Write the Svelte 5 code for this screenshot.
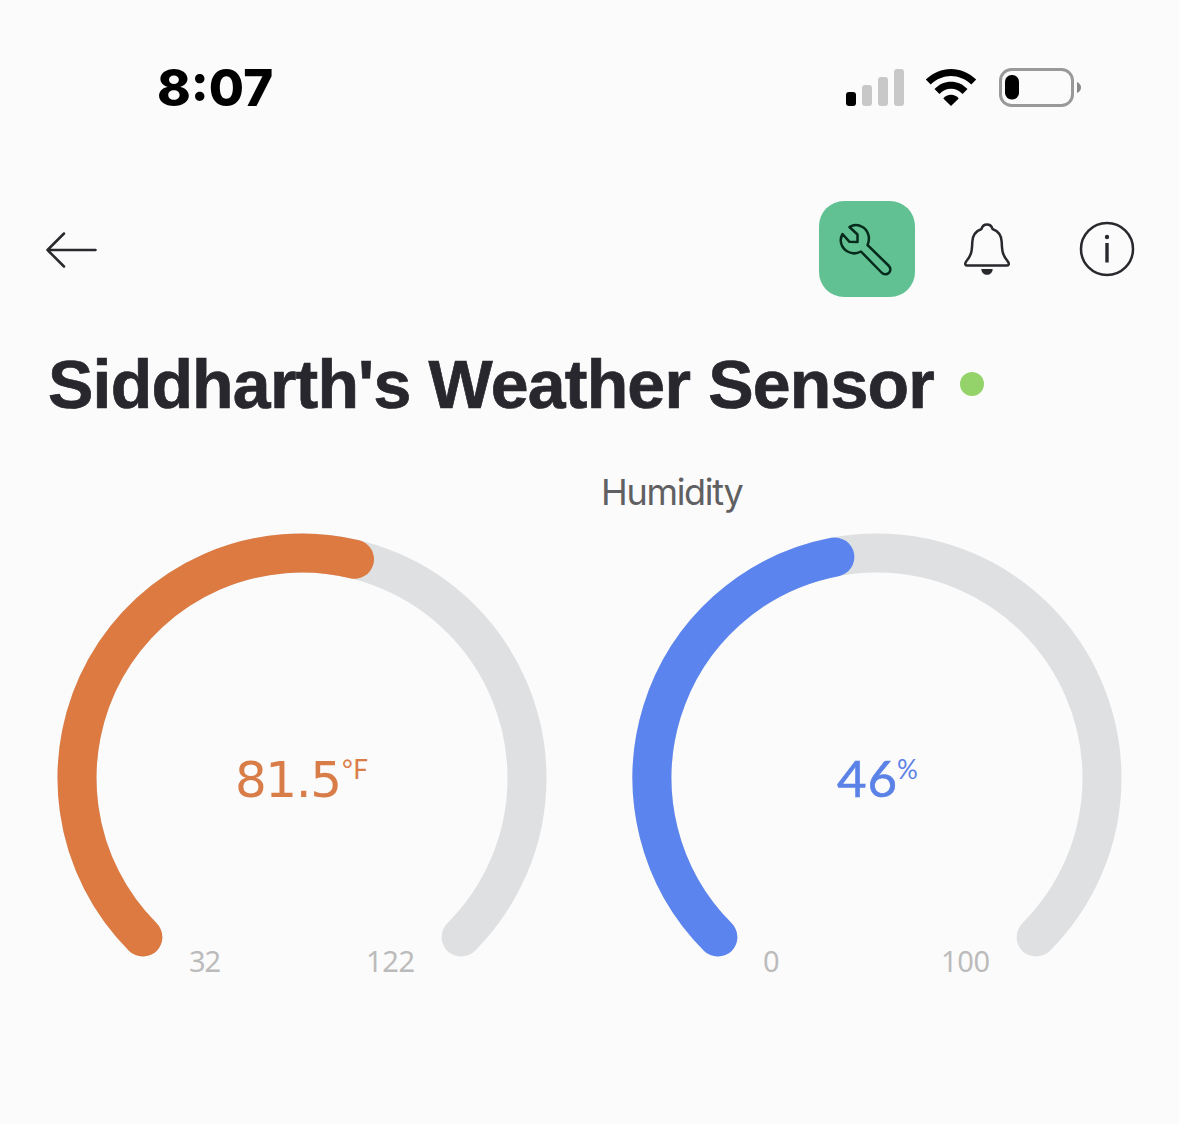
<script>
  const gauges = [
    { title: '', value: '81.5', unit: '°F', min: 32, max: 122, now: 81.5, kind: 'temperature', x: 235, len: 107, unitX: 342, unitLen: 26, minX: 189, minLen: 32, maxX: 366, maxLen: 49 },
    { title: 'Humidity', value: '46', unit: '%', min: 0, max: 100, now: 46, kind: 'humidity', x: 262, len: 60, unitX: 322, unitLen: 19, minX: 188, minLen: 16, maxX: 366, maxLen: 49 }
  ];
  const cx = 302;
  const cy = 248;
  const r = 225;
  function point(deg) {
    const a = (deg * Math.PI) / 180;
    return `${cx + r * Math.cos(a)} ${cy + r * Math.sin(a)}`;
  }
  function arc(fraction) {
    const sweep = 270 * fraction;
    return `M${point(135)} A${r} ${r} 0 ${sweep > 180 ? 1 : 0} 1 ${point(135 + sweep)}`;
  }
</script>

<main>
  <div class="status">
    <span class="time">8:07</span>
    <div class="system">
      <svg class="signal" width="60" height="40" viewBox="0 0 60 40">
        <rect x="1" y="25" width="10" height="14" rx="3" fill="#000" />
        <rect x="17" y="18" width="10" height="21" rx="3" />
        <rect x="33" y="10" width="10" height="29" rx="3" />
        <rect x="49" y="2" width="10" height="37" rx="3" />
      </svg>
      <svg class="wifi" width="52" height="40" viewBox="0 0 52 40">
        <path d="M0.800 12.600C15 -1.700 37 -1.700 51.200 12.600L46.300 17.500C34.500 6 17.500 6 5.700 17.500Z" />
        <path d="M9.500 22C18.500 12.200 33.500 12.200 42.500 22L37.600 27C31 20 21 20 14.400 27Z" />
        <path d="M18.300 31.500C22 26.500 30 26.500 33.700 31.500L26 39Z" />
      </svg>
      <svg class="battery" width="84" height="40" viewBox="0 0 84 40">
        <rect x="2.500" y="2.500" width="72" height="36" rx="11" fill="none" stroke="#999" stroke-width="3" />
        <rect x="7" y="8" width="14" height="24.500" rx="6.500" />
        <path d="M79 15Q83 17 83 20.500Q83 24 79 26Z" fill="#888" />
      </svg>
    </div>
  </div>

  <nav>
    <button class="back" aria-label="Back">
      <svg width="54" height="42" viewBox="0 0 54 42"><path d="M50.500 22H2.500M19 5.500 2.500 22l16.500 16.500" /></svg>
    </button>
    <div class="actions">
      <button class="wrench" aria-label="Settings">
        <svg width="96" height="96" viewBox="0 0 96 96">
          <path d="M30.500 26 38.500 33.500 38.500 41 30.500 40.800 23.500 33C20 39 22 47 28.500 50.500C33 53 37.500 53 42 50.500L62 71C67 77 75 70 69.500 64.500L48.500 44C51.500 37.500 49.500 29.500 43.500 26C39 23.300 34.500 23.500 30.500 26Z" />
        </svg>
      </button>
      <button aria-label="Notifications">
        <svg width="50" height="58" viewBox="0 0 50 58">
          <path d="M25 4.500C22 4.500 20.300 6 19.500 9C14 11 10.500 15 10.300 22C10 31 9.500 35 4.500 41C2.500 43.500 3 45.500 5 45.500H45C47 45.500 47.500 43.500 45.500 41C40.500 35 40 31 39.700 22C39.500 15 36 11 30.500 9C29.700 6 28 4.500 25 4.500Z" />
          <path class="solid" d="M19.300 49H30.700C30.500 56.700 19.500 56.700 19.300 49Z" />
        </svg>
      </button>
      <button aria-label="Information">
        <svg width="58" height="58" viewBox="0 0 58 58">
          <circle cx="29" cy="29" r="26" />
          <path class="stem" d="M29 23V42.500" />
          <circle class="solid" cx="29" cy="17" r="2.200" />
        </svg>
      </button>
    </div>
  </nav>

  <header>
    <h1>Siddharth's Weather Sensor</h1>
    <span class="online"></span>
  </header>

  <section class="gauges">
    {#each gauges as g}
      <article class={g.kind}>
        <h2>{g.title}</h2>
        <svg width="575" height="470" viewBox="0 0 575 470">
          <path class="track" d={arc(1)} />
          <path class="fill" d={arc((g.now - g.min) / (g.max - g.min))} />
          <text class="value" x={g.x} y="267" textLength={g.len}>{g.value}</text>
          <text class="unit" x={g.unitX} y="249" textLength={g.unitLen}>{g.unit}</text>
          <text class="limit" x={g.minX} y="442" textLength={g.minLen}>{g.min}</text>
          <text class="limit" x={g.maxX} y="442" textLength={g.maxLen}>{g.max}</text>
        </svg>
      </article>
    {/each}
  </section>
</main>

<style>
  :global(body) { margin: 0; background: #fbfbfb; }
  main { width: 1179px; height: 1124px; overflow: hidden; background: #fbfbfb; box-sizing: border-box; font-family: Inter, "Liberation Sans", sans-serif; }
  svg { display: block; flex: none; }
  .status { height: 177px; display: flex; justify-content: space-between; padding: 0 98px 0 157px; box-sizing: border-box; }
  .time { font-size: 51px; line-height: 60px; font-weight: 800; letter-spacing: 0; padding-top: 58px; color: #000; }
  .system { display: flex; padding-top: 67px; }
  .signal { fill: #c8c8c8; margin-right: 20px; }
  .wifi { margin-right: 21px; }
  .battery { margin-right: -1px; }
  nav { height: 144px; display: flex; align-items: center; justify-content: space-between; padding: 0 43px 0 45px; }
  button { border: 0; padding: 0; background: none; }
  .actions { display: flex; align-items: center; }
  .actions button:nth-child(2) { margin: 0 66px 0 47px; }
  nav svg { fill: none; stroke: #28282d; stroke-width: 2.5; stroke-linecap: round; stroke-linejoin: round; }
  nav .solid { fill: #28282d; stroke: none; }
  nav .stem { stroke-width: 3.4; stroke-linecap: butt; }
  .wrench { width: 96px; height: 96px; border-radius: 25px; background: #61c192; }
  .wrench svg { stroke: #062a1b; }
  header { height: 126px; display: flex; align-items: center; padding-left: 48px; }
  h1 { margin: 0; font: 700 68px/80px "Liberation Sans", Arial, sans-serif; letter-spacing: -0.8px; color: #28272e; white-space: nowrap; -webkit-text-stroke: 0.7px #28272e; }
  .online { width: 24px; height: 24px; border-radius: 50%; background: #94d36a; margin-left: 26px; }
  .gauges { display: grid; grid-template-columns: 575px 575px; }
  h2 { height: 83px; margin: 0; padding: 23px 0 0 26px; box-sizing: border-box; font: 400 36px/45px Inter, sans-serif; letter-spacing: -1.3px; color: #606062; }
  .track, .fill { fill: none; stroke-width: 39; stroke-linecap: round; }
  .track { stroke: #dfe0e2; }
  .temperature .fill { stroke: #dd7a41; }
  .humidity .fill { stroke: #5b84ee; }
  .temperature .value, .temperature .unit { fill: #d97d48; }
  .humidity .value, .humidity .unit { fill: #5b82e6; }
  .value { font-size: 50px; font-family: "DejaVu Sans", sans-serif; }
  .humidity .value { font-family: Lato, sans-serif; font-size: 51px; stroke: #5b82e6; stroke-width: 0.6px; }
  .unit { font-size: 26px; font-family: Lato, sans-serif; }
  .limit { font-size: 29px; font-family: "Noto Sans", sans-serif; fill: #bbb; }
</style>
